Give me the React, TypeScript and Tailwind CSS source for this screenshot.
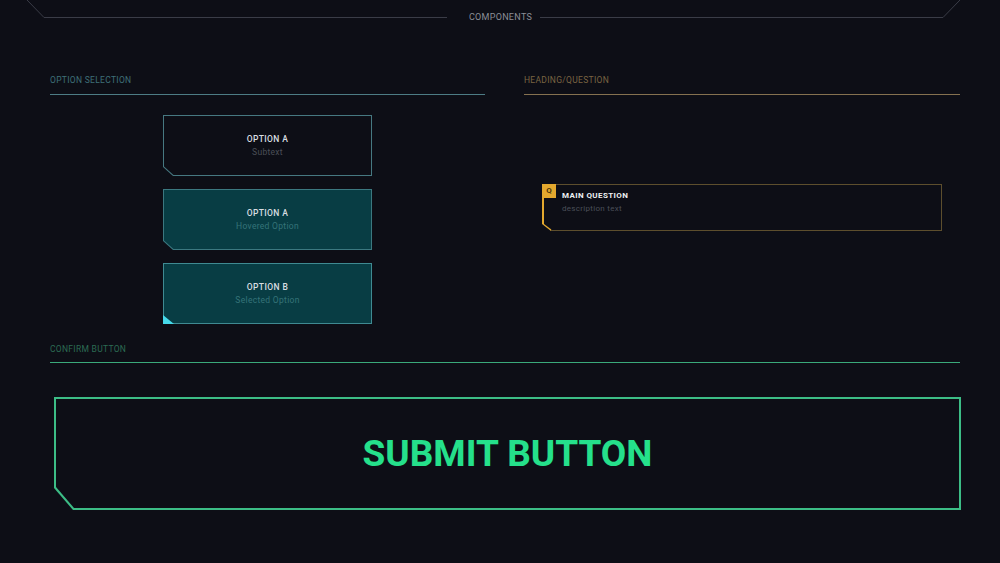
import type React from "react"

const font = { fontFamily: "Roboto, 'Liberation Sans', sans-serif" }

type Variant = "idle" | "hover" | "selected"

const OptionCard: React.FC<{ title: string; sub: string; variant: Variant }> = ({ title, sub, variant }) => {
  const edge =
    variant === "idle" ? "bg-[#467881]" : variant === "hover" ? "bg-[#3b7880]" : "bg-[#3f8a92]"
  const fill = variant === "idle" ? "bg-[#0d0e16]" : "bg-[#083d44]"
  const subColor = variant === "idle" ? "text-[#4b4e57]" : "text-[#357479]"
  const cut = variant === "selected" ? "" : "[clip-path:polygon(0_0,100%_0,100%_100%,10px_100%,0_calc(100%-9px))]"
  const cutIn = variant === "selected" ? "" : "[clip-path:polygon(0_0,100%_0,100%_100%,9.5px_100%,0_calc(100%-8.5px))]"

  return (
    <div className={`relative w-[209px] h-[61px] p-px ${edge} ${cut}`}>
      <div className={`h-full flex flex-col items-center justify-center gap-[3px] ${fill} ${cutIn}`}>
        <span className="text-[8.5px] leading-[10px] font-medium tracking-[0.4px] text-[#d9dee2]">{title}</span>
        <span className={`text-[8.5px] leading-[10px] tracking-[0.3px] ${subColor}`}>{sub}</span>
      </div>
      {variant === "selected" && (
        <div className="absolute left-0 bottom-0 w-[11px] h-[9px] bg-[#46d9ea] [clip-path:polygon(0_0,100%_100%,0_100%)]" />
      )}
    </div>
  )
}

const SectionLabel: React.FC<{ text: string; color: string; line: string }> = ({ text, color, line }) => (
  <div>
    <div className={`text-[8.5px] leading-[12px] tracking-[0.3px] ${color}`}>{text}</div>
    <div className={`mt-[8px] h-px ${line}`} />
  </div>
)

export default function App() {
  return (
    <div className="w-[1000px] h-[563px] overflow-hidden bg-[#0d0e16]" style={font}>
      {/* top frame */}
      <div className="flex items-start pl-[27px] pr-[40px] h-[34px]">
        <svg width="18" height="18" className="shrink-0">
          <path d="M0 0 L17 17.5 L18 17.5" stroke="#3a3c47" strokeWidth="1" fill="none" />
        </svg>
        <div className="flex-1 mt-[17px] h-px bg-[#3a3c47]" />
        <span className="ml-[22px] mr-[8px] mt-[11px] text-[9px] leading-[12px] tracking-[0.3px] text-[#8b8e97]">COMPONENTS</span>
        <div className="flex-1 mt-[17px] h-px bg-[#3a3c47]" />
        <svg width="18" height="18" className="shrink-0">
          <path d="M0 17.5 L1 17.5 L18 0" stroke="#3a3c47" strokeWidth="1" fill="none" />
        </svg>
      </div>

      <div className="pl-[50px] pr-[40px]">
        <div className="grid grid-cols-[435px_436px] gap-[39px] mt-[40px]">
          <div>
            <SectionLabel text="OPTION SELECTION" color="text-[#3f7079]" line="bg-[#4d7c85]" />
            <div className="flex flex-col items-center gap-[13px] mt-[20px]">
              <OptionCard title="OPTION A" sub="Subtext" variant="idle" />
              <OptionCard title="OPTION A" sub="Hovered Option" variant="hover" />
              <OptionCard title="OPTION B" sub="Selected Option" variant="selected" />
            </div>
          </div>

          <div>
            <SectionLabel text="HEADING/QUESTION" color="text-[#7a6442]" line="bg-[#857150]" />
            <div className="flex justify-center mt-[89px]">
              <div className="relative w-[400px] h-[47px] p-px pl-[2px] bg-[linear-gradient(90deg,#e3a82e_0px,#e3a82e_9px,#5d4e2d_9px)] [clip-path:polygon(0_0,100%_0,100%_100%,9px_100%,0_calc(100%-7px))]">
                <div className="h-full bg-[#0d0e16] pl-[18px] pt-[6px] [clip-path:polygon(0_0,100%_0,100%_100%,8px_100%,0_calc(100%-6px))]">
                  <div className="text-[8px] leading-[10px] font-bold tracking-[0.4px] text-[#eef0f2]">MAIN QUESTION</div>
                  <div className="mt-[3px] text-[8px] leading-[10px] tracking-[0.3px] text-[#4b4e58]">description text</div>
                </div>
                <div className="absolute left-0 top-0 w-[14px] h-[14px] bg-[#e3a82e] flex items-center justify-center text-[8px] font-bold text-[#4a3408]">
                  Q
                </div>
              </div>
            </div>
          </div>
        </div>

        <div className="mt-[19px]">
          <div className="text-[8.5px] leading-[12px] tracking-[0.3px] text-[#2c6b53]">CONFIRM BUTTON</div>
          <div className="mt-[7px] h-px bg-[#3aa97a]" />
        </div>

        <div className="ml-[4px] mr-[-1px] mt-[34px] h-[113px] p-[2px] bg-[#3cbd86] [clip-path:polygon(0_0,100%_0,100%_100%,19px_100%,0_calc(100%-22px))]">
          <div className="h-full flex items-center justify-center bg-[#0d0e16] [clip-path:polygon(0_0,100%_0,100%_100%,18px_100%,0_calc(100%-21px))]">
            <span className="text-[37px] leading-[40px] font-bold text-[#25e08b]">SUBMIT BUTTON</span>
          </div>
        </div>
      </div>
    </div>
  )
}
